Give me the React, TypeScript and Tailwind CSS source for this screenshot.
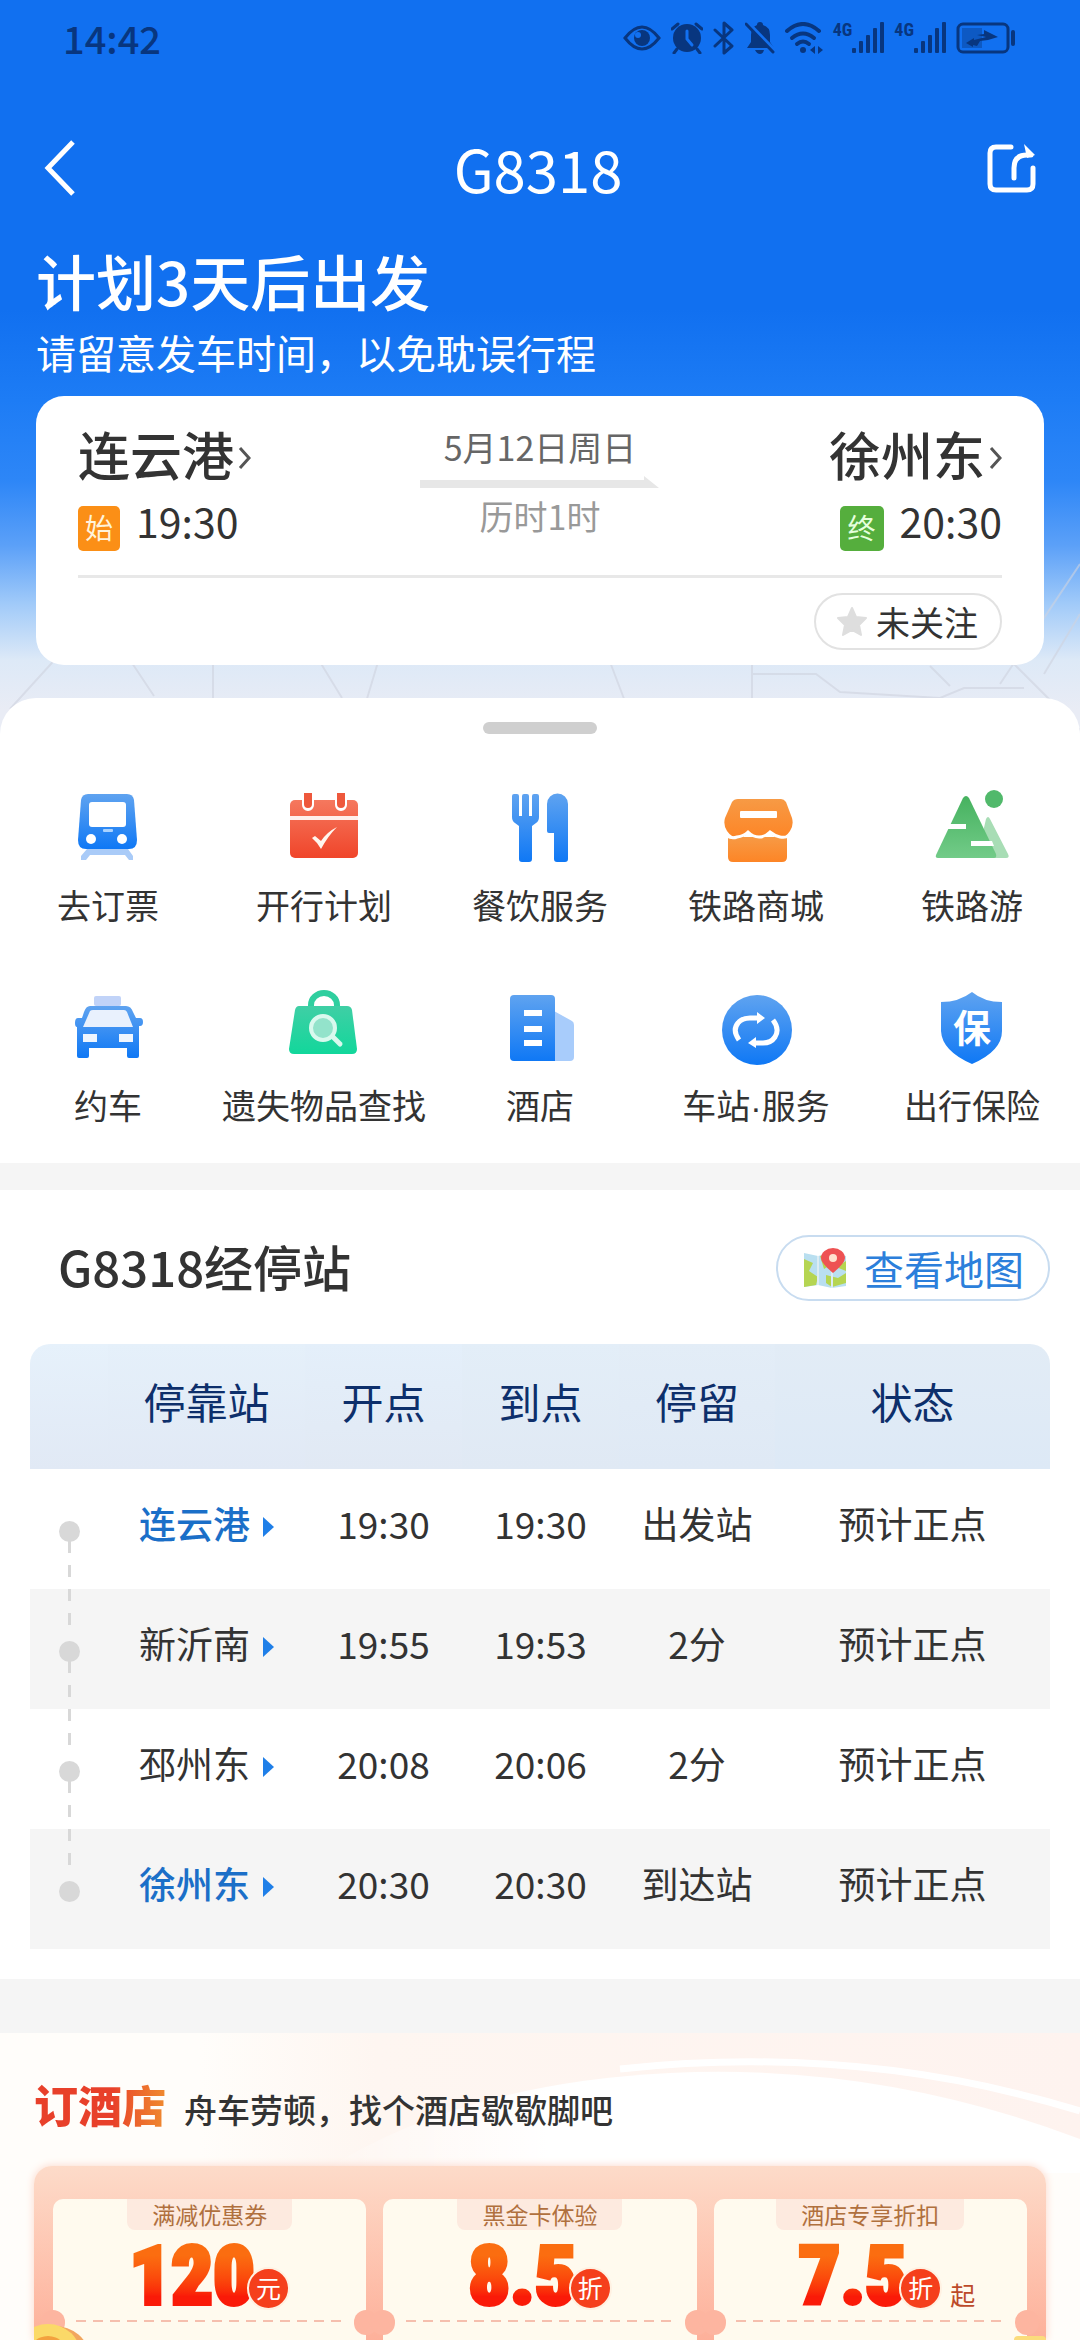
import type { ReactNode } from 'react'

interface Stop {
  name: string
  depart: string
  arrive: string
  stay: string
  status: string
  terminal?: boolean
}

const STOPS: Stop[] = [
  { name: '连云港', depart: '19:30', arrive: '19:30', stay: '出发站', status: '预计正点', terminal: true },
  { name: '新沂南', depart: '19:55', arrive: '19:53', stay: '2分', status: '预计正点' },
  { name: '邳州东', depart: '20:08', arrive: '20:06', stay: '2分', status: '预计正点' },
  { name: '徐州东', depart: '20:30', arrive: '20:30', stay: '到达站', status: '预计正点', terminal: true },
]

const COUPONS = [
  { label: '满减优惠券', value: '120', unit: '元', suffix: '' },
  { label: '黑金卡体验', value: '8.5', unit: '折', suffix: '' },
  { label: '酒店专享折扣', value: '7.5', unit: '折', suffix: '起' },
]

function Icon({ children }: { children: ReactNode }) {
  return (
    <svg viewBox="0 0 80 80" className="h-20 w-20" aria-hidden="true">
      {children}
    </svg>
  )
}

const SERVICES: { label: string; icon: ReactNode }[] = [
  {
    label: '去订票',
    icon: (
      <Icon>
        <path d="M19 60h41l5 7v4h-4l-4-5H22l-4 5h-5v-4z" fill="#a9cbf8" />
        <path d="M20 5h39q6 0 7 6l3 40q0 9-8 9H18q-8 0-8-9l3-40q1-6 7-6z" fill="url(#blue)" />
        <rect x="21" y="13" width="37" height="25" rx="3" fill="#fff" />
        <rect x="35" y="40" width="10" height="3" rx="1" fill="#a9d2ff" />
        <circle cx="23" cy="50" r="5" fill="#fff" />
        <circle cx="54" cy="50" r="5" fill="#fff" />
      </Icon>
    ),
  },
  {
    label: '开行计划',
    icon: (
      <Icon>
        <rect x="6" y="11" width="68" height="58" rx="5" fill="url(#red)" />
        <path d="M6 27h68v4H6z" fill="#fff0ec" />
        <path d="M18 10v6a6 6 0 0 0 12 0v-6zM51 10v6a6 6 0 0 0 12 0v-6z" fill="#fff" />
        <path d="M20 4h8v11a4 4 0 0 1-8 0zM53 4h8v11a4 4 0 0 1-8 0z" fill="#ee583c" />
        <path d="M28 49l3-2 6 5q6-9 16-14-9 9-16 22-4-7-9-11z" fill="#fff6ee" />
      </Icon>
    ),
  },
  {
    label: '餐饮服务',
    icon: (
      <Icon>
        <path
          d="M12 7q0-2 2-2h3q2 0 2 2v20h3V7q0-2 2-2h3q2 0 2 2v20h3V7q0-2 2-2h3q2 0 2 2v21q0 4-3 6l-4 3v33q0 3-3 3h-7q-3 0-3-3V37l-4-3q-3-2-3-6z"
          fill="url(#blue)"
        />
        <path d="M47 15a10 10 0 0 1 21 0v55q0 3-3 3h-8q-3 0-3-3V44h-5q-2 0-2-2z" fill="url(#blue)" />
      </Icon>
    ),
  },
  {
    label: '铁路商城',
    icon: (
      <Icon>
        <path d="M12 48h59v20q0 5-5 5H17q-5 0-5-5z" fill="url(#orange)" />
        <path
          d="M22 10h43q3 0 5 3l6 16q2 7-2 13-4 6-10 7-6 0-10-6-5 6-11 6t-11-6q-4 6-10 6-7-1-11-7-4-6-2-13l7-16q2-3 6-3z"
          fill="url(#orange)"
        />
        <path
          d="M11 47q5 3 10 1 7-1 11-5 5 5 11 5t11-5q5 4 10 5t9-1"
          fill="none"
          stroke="#fff"
          strokeWidth="3"
          strokeLinecap="round"
        />
        <rect x="24" y="22" width="37" height="7" rx="1" fill="#fff" />
      </Icon>
    ),
  },
  {
    label: '铁路游',
    icon: (
      <Icon>
        <path d="M54 30q2-4 4 0l18 35q2 4-2 4H45z" fill="#a8ddb5" />
        <path d="M31 9q3-4 6 0l27 56q1 4-2 4H6q-3 0-2-3z" fill="url(#green)" />
        <circle cx="62" cy="10" r="9" fill="#51b96b" />
        <path d="M14 35h20v5H12zM39 52h21l2 5H39z" fill="#fff" />
      </Icon>
    ),
  },
  {
    label: '约车',
    icon: (
      <Icon>
        <rect x="26" y="7" width="27" height="10" rx="2" fill="#c1d3f8" />
        <path
          d="M22 17h36q5 0 7 6l3 6h4q3 0 3 4t-3 4h-1v30q0 2-2 2h-8q-2 0-2-2v-8H21v8q0 2-2 2h-8q-2 0-2-2V38q-2 0-2-4 0-5 3-5h4l2-6q2-6 6-6z"
          fill="url(#blue)"
        />
        <path d="M22 22q1-1 3-1h31q2 0 3 2l6 15H15z" fill="#e9f1fd" />
        <path d="M15 45h14v8H15zM51 45h14v8H51z" fill="#eef5fe" />
      </Icon>
    ),
  },
  {
    label: '遗失物品查找',
    icon: (
      <Icon>
        <path d="M27 19v-3a13 12 0 0 1 26 0v3" fill="none" stroke="#2fcf9f" strokeWidth="6" />
        <path d="M15 17h48q4 0 5 4l5 39q0 5-5 5H10q-5 0-5-5l6-39q1-4 4-4z" fill="url(#teal)" />
        <path d="M48 47l8 8" stroke="#d9f9ee" strokeWidth="5" strokeLinecap="round" />
        <circle cx="39" cy="39" r="12" fill="#93e3cb" stroke="#d9f9ee" strokeWidth="4" />
      </Icon>
    ),
  },
  {
    label: '酒店',
    icon: (
      <Icon>
        <path d="M54 22l18 10q2 1 2 4v32q0 4-4 4H54z" fill="#a8ccfb" />
        <path d="M14 6h37q4 0 4 4v62H14q-4 0-4-4V10q0-4 4-4z" fill="url(#blue)" />
        <path d="M24 21h18v6H24zM24 37h18v6H24zM24 51h18v6H24z" fill="#fff" />
      </Icon>
    ),
  },
  {
    label: '车站·服务',
    icon: (
      <Icon>
        <circle cx="41" cy="41" r="35" fill="url(#blue)" />
        <g fill="none" stroke="#fff" strokeWidth="5">
          <path d="M23 51q-7-10-1-17 4-5 12-5h8" />
          <path d="M57 31q7 9 2 17-4 6-12 6H39" />
        </g>
        <path d="M41 23l8 6-8 6zM40 48l-8 6 8 5z" fill="#fff" />
      </Icon>
    ),
  },
  {
    label: '出行保险',
    icon: (
      <Icon>
        <path d="M40 3q12 10 30 10v29q0 20-30 33Q10 62 9 42V13q18 0 31-10z" fill="url(#blue)" />
        <text x="40" y="53" textAnchor="middle" fontSize="38" fontWeight="700" fill="#fff">
          保
        </text>
      </Icon>
    ),
  },
]

/* Shared gradients for the service icons */
function IconDefs() {
  const ramps = [
    ['blue', '#5fa3f0', '#0f78f5'],
    ['red', '#f5785e', '#f0452a'],
    ['orange', '#f79a45', '#fd8526'],
    ['green', '#46b25f', '#72cb88'],
    ['teal', '#3fcfa5', '#12d79b'],
  ]
  return (
    <svg className="absolute h-0 w-0" aria-hidden="true">
      <defs>
        {ramps.map(([id, from, to]) => (
          <linearGradient key={id} id={id} x1="0" y1="0" x2="0" y2="1">
            <stop offset="0" stopColor={from} />
            <stop offset="1" stopColor={to} />
          </linearGradient>
        ))}
      </defs>
    </svg>
  )
}

function Signal() {
  return (
    <div className="flex items-start">
      <span className="font-['Roboto_Condensed','Noto_Sans_CJK_SC',sans-serif] text-[18px] leading-4 font-bold">4G</span>
      <svg width="32" height="32" viewBox="0 0 32 32" fill="currentColor" aria-hidden="true">
        <rect x="0" y="26" width="4" height="5" rx="1" />
        <rect x="7" y="19" width="4" height="12" rx="1" />
        <rect x="14" y="13" width="4" height="18" rx="1" />
        <rect x="21" y="6" width="4" height="25" rx="1" />
        <rect x="28" y="0" width="4" height="31" rx="1" />
      </svg>
    </div>
  )
}

function StatusBar() {
  return (
    <div className="flex h-[76px] items-center justify-between pr-16 pl-[63px] text-[#08367f]">
      <span className="text-[38px] leading-[48px] font-medium">14:42</span>
      <div className="flex items-center gap-[10px]">
        <svg width="38" height="28" viewBox="0 0 38 28" aria-hidden="true">
          <path d="M2 14Q19-8 36 14 19 36 2 14z" fill="none" stroke="currentColor" strokeWidth="3" />
          <circle cx="19" cy="14" r="8" fill="currentColor" />
          <circle cx="15" cy="11" r="3" fill="#1270f0" />
        </svg>
        <svg width="32" height="32" viewBox="0 0 32 32" aria-hidden="true">
          <circle cx="16" cy="16" r="14" fill="currentColor" />
          <path d="M1 7l6-5M31 7l-6-5M6 27l-3 4M26 27l3 4" stroke="currentColor" strokeWidth="3" strokeLinecap="round" />
          <path d="M16 9v8l5 6" fill="none" stroke="#1270f0" strokeWidth="3" strokeLinecap="round" />
        </svg>
        <svg width="22" height="34" viewBox="0 0 22 34" fill="none" stroke="currentColor" strokeWidth="3" aria-hidden="true">
          <path d="M2 9l17 16-8 7V2l8 7L2 25" strokeLinejoin="round" strokeLinecap="round" />
        </svg>
        <svg width="30" height="32" viewBox="0 0 30 32" aria-hidden="true">
          <path d="M15 0q3 0 3 3 7 2 7 10v7l4 6H2l4-6v-7q0-8 6-10 0-3 3-3z" fill="currentColor" />
          <path d="M10 28h9q-1 4-4 4t-5-4z" fill="currentColor" />
          <path d="M3 1l27 28" stroke="#1270f0" strokeWidth="4" />
          <path d="M1 2l27 28" stroke="currentColor" strokeWidth="3" strokeLinecap="round" />
        </svg>
        <svg width="38" height="32" viewBox="0 0 38 32" aria-hidden="true">
          <g fill="none" stroke="currentColor" strokeWidth="4" strokeLinecap="round">
            <path d="M2 9Q18-5 34 9" />
            <path d="M7 16q11-9 22 0" />
            <path d="M12 22q6-5 12 0" />
          </g>
          <circle cx="18" cy="28" r="3" fill="currentColor" />
          <path d="M25 28l5-4v8zM38 28l-5-4v8z" fill="currentColor" />
        </svg>
        <Signal />
        <Signal />
        <svg width="60" height="32" viewBox="0 0 60 32" aria-hidden="true">
          <rect x="2" y="2" width="50" height="28" rx="5" fill="none" stroke="currentColor" strokeWidth="3" />
          <rect x="6" y="6" width="20" height="20" fill="currentColor" opacity="0.4" />
          <path d="M10 21l8-5v2l12-3-9-2 7-1v-4l14 7-10 3-8 1-3 5-4-1v2z" fill="currentColor" />
          <rect x="55" y="8" width="4" height="16" rx="2" fill="currentColor" />
        </svg>
      </div>
    </div>
  )
}

function Chevron() {
  return (
    <svg width="13" height="22" viewBox="0 0 13 22" fill="none" stroke="#555" strokeWidth="3" className="mt-2" aria-hidden="true">
      <path d="M2 1l9 10-9 10" />
    </svg>
  )
}

function Hero() {
  return (
    <header className="relative bg-[linear-gradient(180deg,#1170f0_0px,#1170f0_310px,#1d7cf5_400px,#2d86f7_480px,#5ba0f8_545px,#a2cbf9_605px,#dde9f7_660px,#e9ecf5_710px)] pb-[69px]">
      {/* Faint road map that shows around the journey card */}
      <svg
        viewBox="0 0 1080 240"
        preserveAspectRatio="none"
        className="absolute inset-x-0 bottom-0 h-[240px] w-full"
        fill="none"
        stroke="#cfd3df"
        strokeWidth="2"
        opacity="0.6"
        aria-hidden="true"
      >
        <path d="M10 215L60 160M130 166l24 36M213 164v42M320 168l22 36M378 168l-12 40M610 168l16 42M752 166v40M752 180h64l24 18 100 6 24-10h60M930 172l20 20M1000 190l80-120M1010 166l70 70M1044 180l36-60" />
      </svg>
      <div className="relative">
        <StatusBar />
        <nav className="mt-11 flex h-24 items-center justify-between pr-[44px] pl-[42px] text-white">
          <button type="button" aria-label="返回" className="flex w-12 justify-start">
            <svg width="34" height="56" viewBox="0 0 34 56" fill="none" stroke="#fff" strokeWidth="5" aria-hidden="true">
              <path d="M31 2L6 28l25 26" />
            </svg>
          </button>
          <h1 className="text-[58px] leading-[72px]">G8318</h1>
          <button type="button" aria-label="分享">
            <svg width="50" height="52" viewBox="0 0 50 52" fill="none" stroke="#fff" strokeWidth="5" aria-hidden="true">
              <path d="M25 5H10q-6 0-6 6v31q0 6 6 6h31q6 0 6-6V26" strokeLinecap="round" />
              <path d="M28 36V26q0-13 13-13h4" strokeLinecap="round" />
              <path d="M38 2l11 11-8 3z" fill="#fff" stroke="none" />
            </svg>
          </button>
        </nav>
        <div className="px-9 text-white">
          <h2 className="mt-6 text-[60px] leading-[80px] font-medium">计划3天后出发</h2>
          <p className="mt-1 text-[40px] leading-[56px]">请留意发车时间，以免耽误行程</p>
        </div>

        <section className="mx-9 mt-4 rounded-[28px] bg-white px-[42px] pt-7 pb-[15px] text-[#333]">
          <div className="grid grid-cols-3 pb-6">
            <div>
              <button type="button" className="flex items-center gap-1 text-[52px] leading-[60px] font-medium">
                连云港 <Chevron />
              </button>
              <div className="mt-4 flex items-start gap-4">
                <span className="mt-[6px] h-[45px] w-[42px] rounded-[5px] bg-[#fb8f16] text-center text-[28px] leading-[42px] text-[#fff3da]">
                  始
                </span>
                <time className="text-[41px] leading-10">19:30</time>
              </div>
            </div>
            <div className="flex flex-col items-center pt-[3px] text-[34px] leading-10">
              <p className="text-[#666]">5月12日周日</p>
              <svg width="240" height="12" viewBox="0 0 240 12" className="mt-[9px]" fill="#e7e7e7" aria-hidden="true">
                <path d="M0 4h224v-4l15 12H0z" />
              </svg>
              <p className="mt-2 text-[#999]">历时1时</p>
            </div>
            <div className="flex flex-col items-end">
              <button type="button" className="flex items-center gap-1 text-[52px] leading-[60px] font-medium">
                徐州东 <Chevron />
              </button>
              <div className="mt-4 flex items-start gap-4">
                <span className="mt-[6px] h-[45px] w-[44px] rounded-[5px] bg-[#55ae3d] text-center text-[28px] leading-[42px] text-[#e6ffdc]">
                  终
                </span>
                <time className="text-[41px] leading-10">20:30</time>
              </div>
            </div>
          </div>
          <div className="flex justify-end border-t-[3px] border-[#e8e8e8] pt-[15px]">
            <button
              type="button"
              className="flex h-[57px] items-center gap-2 rounded-full border-2 border-[#e2e2e2] pr-[22px] pl-5 text-[34px] leading-[48px]"
            >
              <svg width="32" height="31" viewBox="0 0 32 31" fill="#dedede" aria-hidden="true">
                <path
                  d="M16 2l4 9 10 1-7 7 2 10-9-5-9 5 2-10-7-7 10-1z"
                  stroke="#dedede"
                  strokeWidth="2"
                  strokeLinejoin="round"
                />
              </svg>
              未关注
            </button>
          </div>
        </section>
      </div>
    </header>
  )
}

function Services() {
  return (
    <section className="relative -mt-9 rounded-t-[36px] bg-white pt-6 pb-9">
      <div className="mx-auto h-3 w-[114px] rounded-full bg-[#cfcfcf]" />
      <div className="mt-[55px] grid grid-cols-5 gap-y-[62px]">
        {SERVICES.map((item) => (
          <button
            key={item.label}
            type="button"
            className="flex flex-col items-center gap-[18px] font-['Liberation_Sans','Noto_Sans_CJK_SC',sans-serif] text-[34px] leading-10 whitespace-nowrap text-[#333]"
          >
            {item.icon}
            {item.label}
          </button>
        ))}
      </div>
    </section>
  )
}

function MapIcon() {
  return (
    <svg width="46" height="42" viewBox="0 0 46 42" aria-hidden="true">
      <path d="M2 6l14 3 14-3 14 3v30l-14 2-14-3-14 2z" fill="#b9dff0" />
      <path d="M2 12l9 4-4 8 9 6-2 8-12 2zM18 9l8-2 4 10-8 5zM24 28l12 3 8-5v10l-14 4-6-4zM34 20l10-6v10z" fill="#b5d552" />
      <path d="M16 9v29M30 6v35" stroke="#dcecf4" strokeWidth="2" />
      <path d="M31 26Q19 16 19 11a12 10 0 0 1 24 0q0 5-12 15z" fill="#ee5253" />
      <circle cx="31" cy="11" r="4" fill="#ffe2cf" />
    </svg>
  )
}

function StopsTable() {
  return (
    <section className="bg-white px-[30px] pt-[45px] pb-[30px]">
      <div className="flex items-center justify-between pl-7">
        <h2 className="pb-1 text-[49px] leading-[60px] font-medium text-[#333]">G8318经停站</h2>
        <button
          type="button"
          className="flex h-[66px] items-center gap-4 rounded-full border-2 border-[#c8dcf0] px-6 text-[40px] leading-[56px] text-[#2c7fdb]"
        >
          <MapIcon />
          查看地图
        </button>
      </div>
      <table className="mt-[43px] w-full table-fixed text-center text-[37px] leading-[52px] text-[#333]">
        <thead>
          <tr className="h-[125px] text-[42px] text-[#0d2f6b]">
            <th className="w-[78px] rounded-tl-[20px] bg-gradient-to-b from-[#e6f1fb] to-[#e1e9f5]" aria-label="进度" />
            <th className="w-[197px] bg-gradient-to-b from-[#e5f0fa] to-[#e1e9f5] pb-3 font-normal">停靠站</th>
            <th className="w-[157px] bg-gradient-to-b from-[#e4effa] to-[#e1e9f4] pb-3 font-normal">开点</th>
            <th className="w-[157px] bg-gradient-to-b from-[#e3eef8] to-[#e0e9f4] pb-3 font-normal">到点</th>
            <th className="w-[156px] bg-gradient-to-b from-[#e3edf7] to-[#dfe9f5] pb-3 font-normal">停留</th>
            <th className="rounded-tr-[20px] bg-gradient-to-b from-[#e2ecf6] to-[#dde9f6] pb-3 font-normal">状态</th>
          </tr>
        </thead>
        <tbody>
          {STOPS.map((stop, i) => (
            <tr key={stop.name} className="h-[120px] even:bg-[#f5f5f5]">
              <td className="relative">
                <span className="mx-auto mt-1 block h-[21px] w-[21px] rounded-full bg-[#d8d8d8]" />
                {i < STOPS.length - 1 && (
                  <span className="absolute top-[72px] left-[38px] h-24 w-[3px] bg-[repeating-linear-gradient(180deg,#d8d8d8_0px,#d8d8d8_12px,transparent_12px,transparent_24px)]" />
                )}
              </td>
              <td className="pb-3">
                <a
                  href="#"
                  className={
                    stop.terminal
                      ? 'inline-flex items-center gap-3 font-medium text-[#1b6fc8]'
                      : 'inline-flex items-center gap-3'
                  }
                >
                  {stop.name}
                  <svg width="12" height="20" viewBox="0 0 12 20" fill="#1f7fe8" className="mt-2" aria-hidden="true">
                    <path d="M1 0l11 10L1 20z" />
                  </svg>
                </a>
              </td>
              <td className="pb-3">{stop.depart}</td>
              <td className="pb-3">{stop.arrive}</td>
              <td className="pb-3">{stop.stay}</td>
              <td className="pb-3">{stop.status}</td>
            </tr>
          ))}
        </tbody>
      </table>
    </section>
  )
}

function Coin() {
  return (
    <svg width="56" height="40" viewBox="0 0 56 40" aria-hidden="true">
      <ellipse cx="20" cy="34" rx="35" ry="30" fill="#f2a65e" />
      <ellipse cx="14" cy="34" rx="33" ry="32" fill="#fbd968" />
      <ellipse cx="14" cy="34" rx="20" ry="20" fill="#f3a13e" />
    </svg>
  )
}

function HotelDeals() {
  return (
    <section className="relative flex flex-1 flex-col overflow-hidden bg-[#fffdfa] px-[34px] pt-[41px]">
      <svg
        viewBox="0 0 1080 140"
        preserveAspectRatio="none"
        className="absolute inset-x-0 top-0 h-[140px] w-full"
        aria-hidden="true"
      >
        <defs>
          <linearGradient id="blush" x1="0" y1="0" x2="1" y2="0">
            <stop offset="0" stopColor="#fffdfa" />
            <stop offset="0.2" stopColor="#fef6f1" />
            <stop offset="1" stopColor="#fef3ef" />
          </linearGradient>
          <linearGradient id="paper" x1="0" y1="0" x2="1" y2="0">
            <stop offset="0" stopColor="#fff" stopOpacity="0" />
            <stop offset="0.3" stopColor="#fff" />
          </linearGradient>
        </defs>
        <path d="M200 0h880v140H200z" fill="url(#blush)" />
        <path d="M320 140q140-90 350-100t410 66v34z" fill="url(#paper)" />
        <path d="M620 36Q860 10 1080 78" stroke="#fff" strokeWidth="7" fill="none" />
      </svg>
      <div className="relative flex items-baseline gap-[18px]">
        <h2 className="bg-gradient-to-r from-[#e8402a] from-60% to-[#ef8a2f] bg-clip-text text-[44px] leading-[60px] font-black text-transparent">
          订酒店
        </h2>
        <p className="text-[33px] leading-10 font-medium text-[#333]">舟车劳顿，找个酒店歇歇脚吧</p>
      </div>
      <div className="relative mt-8 flex flex-1 flex-col rounded-t-[18px] bg-gradient-to-b from-[#fddbc9] to-[#fdb09a] px-[19px] pt-[33px] shadow-[0_0_8px_#fbd5c8]">
        <div className="grid flex-1 grid-cols-3 gap-[17px]">
          {COUPONS.map((coupon) => (
            <button
              key={coupon.label}
              type="button"
              className="relative flex flex-col items-center justify-start rounded-t-[10px] bg-[#fffaee] pb-1"
            >
              <span className="rounded-b-[8px] bg-[#fdeadf] px-[25px] text-[23px] leading-[31px] text-[#b0703e]">
                {coupon.label}
              </span>
              <span className="relative flex h-[80px] items-end">
                <span className="bg-gradient-to-b from-[#fb6d10] from-20% to-[#fa1a08] to-80% bg-clip-text font-['Roboto_Condensed','Roboto',sans-serif] text-[82px] leading-[68px] font-black text-transparent [-webkit-text-stroke:4px_transparent]">
                  {coupon.value}
                </span>
                <span className="-ml-2 h-[43px] w-[43px] rounded-full border-2 border-[#fff1e2] bg-[#f53f1c] text-center text-[25px] leading-[37px] text-white">
                  {coupon.unit}
                </span>
                {coupon.suffix && (
                  <span className="absolute bottom-0 left-full ml-2 text-[25px] leading-[32px] text-[#bc4a2a]">
                    {coupon.suffix}
                  </span>
                )}
              </span>
              <span className="mt-[10px] h-[2px] w-[268px] bg-[repeating-linear-gradient(90deg,#f5bfae_0px,#f5bfae_10px,transparent_10px,transparent_17px)]" />
              <span className="absolute top-[111px] -left-[12px] h-[25px] w-[24px] rounded-full bg-[#fdb5a0]" />
              <span className="absolute top-[111px] -right-[12px] h-[25px] w-[24px] rounded-full bg-[#fdb5a0]" />
            </button>
          ))}
        </div>
        <div className="absolute bottom-0 left-0 h-[18px] overflow-hidden">
          <Coin />
        </div>
        <div className="absolute right-0 bottom-0 h-1 w-8 rounded-t-full bg-[#fbdc7c]" />
      </div>
    </section>
  )
}

export default function App() {
  return (
    <main className="flex min-h-screen w-full flex-col bg-[#f5f5f5] font-['Noto_Sans_CJK_SC',sans-serif]">
      <IconDefs />
      <Hero />
      <Services />
      <div className="mt-[27px]">
        <StopsTable />
      </div>
      <div className="mt-[54px] flex flex-1 flex-col">
        <HotelDeals />
      </div>
    </main>
  )
}
